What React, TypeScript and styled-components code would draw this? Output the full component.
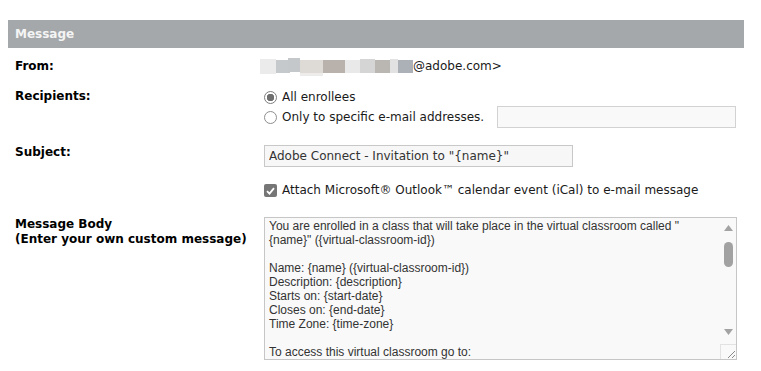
import React from "react";
import styled, { createGlobalStyle } from "styled-components";

const GlobalStyle = createGlobalStyle`
  body {
    margin: 0;
    background: #fff;
    font-family: "DejaVu Sans", Verdana, sans-serif;
  }
`;

const Page = styled.div`
  width: 736px;
  padding: 20px 0 0 8px;
`;

const SectionHeader = styled.div`
  height: 28px;
  line-height: 29px;
  padding-left: 7px;
  background: #a4a8ab;
  color: #f4f4f4;
  font-weight: bold;
  font-size: 12px;
`;

const Row = styled.div<{ $top: number }>`
  display: flex;
  align-items: flex-start;
  margin-top: ${({ $top }) => $top}px;
`;

const Label = styled.div<{ $pad?: number }>`
  flex-shrink: 0;
  width: 256px;
  box-sizing: border-box;
  padding-left: 7px;
  padding-top: ${({ $pad }) => $pad ?? 0}px;
  font-weight: bold;
  font-size: 12px;
  line-height: 15px;
  color: #000;
`;

const Value = styled.div`
  flex: 1;
  min-width: 0;
  font-size: 12px;
  line-height: 15px;
  color: #1a1a1a;
`;

const Sender = styled.div`
  display: flex;
  align-items: center;
  height: 15px;
  margin-left: -4px;
`;

const Option = styled.label<{ $h: number }>`
  display: flex;
  align-items: center;
  height: ${({ $h }) => $h}px;
`;

const Radio = styled.span<{ $checked?: boolean }>`
  box-sizing: border-box;
  width: 13px;
  height: 13px;
  margin-right: 5px;
  border-radius: 50%;
  border: 1px solid ${({ $checked }) => ($checked ? "#7d7d7d" : "#8e8e8e")};
  background: ${({ $checked }) =>
    $checked ? "radial-gradient(circle, #6f6f6f 0 3.5px, #fff 4px)" : "#fff"};
`;

const Check = styled.span`
  display: flex;
  align-items: center;
  justify-content: center;
  width: 13px;
  height: 13px;
  margin-right: 5px;
  border-radius: 2px;
  background: #767676;
`;

const Field = styled.input<{ $w: number }>`
  box-sizing: border-box;
  width: ${({ $w }) => $w}px;
  height: 22px;
  padding: 0 4px;
  border: 1px solid #c8c8c8;
  background: #f7f7f7;
  font-family: "DejaVu Sans", Verdana, sans-serif;
  font-size: 12px;
  color: #333;
  outline: none;
`;

const EmailField = styled(Field)`
  margin-left: 13px;
  border-color: #d2d2d2;
  background: #f9f9f9;
`;

const TextBox = styled.div`
  box-sizing: border-box;
  width: 473px;
  height: 143px;
  display: grid;
  grid-template-columns: 1fr 16px;
  border: 1px solid #c6c6c6;
  background: #f9f9f9;
`;

const TextContent = styled.div`
  padding: 1px 4px 0;
  overflow: hidden;
  white-space: pre;
  font-family: "Liberation Sans", Arial, sans-serif;
  font-size: 12px;
  line-height: 14px;
  color: #333;
`;

const ScrollBar = styled.div`
  display: flex;
  flex-direction: column;
  align-items: center;
`;

const ArrowButton = styled.div`
  height: 20px;
  display: flex;
  align-items: center;
  justify-content: center;
`;

const Track = styled.div`
  flex: 1;
  padding-top: 4px;
`;

const Thumb = styled.div`
  width: 9px;
  height: 25px;
  border-radius: 5px;
  background: #a2a2a2;
`;

const Grip = styled.div`
  box-sizing: border-box;
  width: 16px;
  height: 15px;
  margin-top: 2px;
  border-top: 1px solid #e2e2e2;
  border-left: 1px solid #e2e2e2;
  display: flex;
  align-items: flex-end;
  justify-content: flex-end;
`;

const blurBlocks = [
  { x: 0, w: 16, y: 1, h: 15, c: "#ebebeb" },
  { x: 16, w: 14, y: 2, h: 13, c: "#c6c9cc" },
  { x: 28, w: 12, y: 0, h: 14, c: "#c4c8cb" },
  { x: 40, w: 23, y: 2, h: 13, c: "#dedad6" },
  { x: 40, w: 23, y: 15, h: 3, c: "#eeecea" },
  { x: 63, w: 22, y: 2, h: 13, c: "#b9b1ab" },
  { x: 85, w: 15, y: 2, h: 13, c: "#e9e9e9" },
  { x: 100, w: 15, y: 1, h: 14, c: "#d5d5d5" },
  { x: 115, w: 15, y: 2, h: 13, c: "#bab6b2" },
  { x: 130, w: 8, y: 1, h: 14, c: "#e2e2e2" },
  { x: 138, w: 15, y: 2, h: 13, c: "#abb1b7" },
];

const bodyText = `You are enrolled in a class that will take place in the virtual classroom called "
{name}" ({virtual-classroom-id})

Name: {name} ({virtual-classroom-id})
Description: {description}
Starts on: {start-date}
Closes on: {end-date}
Time Zone: {time-zone}

To access this virtual classroom go to:
https://connect.adobe.com/{url-path}/`;

export default function App() {
  return (
    <Page>
      <GlobalStyle />
      <SectionHeader>Message</SectionHeader>

      <Row $top={11}>
        <Label>From:</Label>
        <Value>
          <Sender>
            <svg width="153" height="18" viewBox="0 0 153 18">
              {blurBlocks.map((b, i) => (
                <rect key={i} x={b.x} y={b.y} width={b.w} height={b.h} fill={b.c} />
              ))}
            </svg>
            <span>@adobe.com&gt;</span>
          </Sender>
        </Value>
      </Row>

      <Row $top={14}>
        <Label $pad={1}>Recipients:</Label>
        <Value>
          <Option $h={18}>
            <Radio $checked />
            All enrollees
          </Option>
          <Option $h={22}>
            <Radio />
            Only to specific e-mail addresses.
            <EmailField $w={239} readOnly defaultValue="" />
          </Option>
        </Value>
      </Row>

      <Row $top={17}>
        <Label>Subject:</Label>
        <Value>
          <Field $w={309} readOnly defaultValue={'Adobe Connect - Invitation to "{name}"'} />
        </Value>
      </Row>

      <Row $top={16}>
        <Label />
        <Value>
          <Option $h={15}>
            <Check>
              <svg width="9" height="8" viewBox="0 0 9 8">
                <path d="M1 4.2 L3.5 6.6 L8 1.2" fill="none" stroke="#fff" strokeWidth="1.8" />
              </svg>
            </Check>
            Attach Microsoft® Outlook™ calendar event (iCal) to e-mail message
          </Option>
        </Value>
      </Row>

      <Row $top={19}>
        <Label>
          Message Body
          <br />
          (Enter your own custom message)
        </Label>
        <Value>
          <TextBox>
            <TextContent>{bodyText}</TextContent>
            <ScrollBar>
              <ArrowButton>
                <svg width="9" height="6" viewBox="0 0 9 6">
                  <path d="M4.5 0 L9 6 L0 6 Z" fill="#a3a3a3" />
                </svg>
              </ArrowButton>
              <Track>
                <Thumb />
              </Track>
              <ArrowButton>
                <svg width="9" height="6" viewBox="0 0 9 6">
                  <path d="M0 0 L9 0 L4.5 6 Z" fill="#a3a3a3" />
                </svg>
              </ArrowButton>
              <Grip>
                <svg width="10" height="10" viewBox="0 0 10 10">
                  <path d="M9 2 L2 9 M9 6 L6 9" stroke="#8a8a8a" strokeWidth="1" />
                </svg>
              </Grip>
            </ScrollBar>
          </TextBox>
        </Value>
      </Row>
    </Page>
  );
}
